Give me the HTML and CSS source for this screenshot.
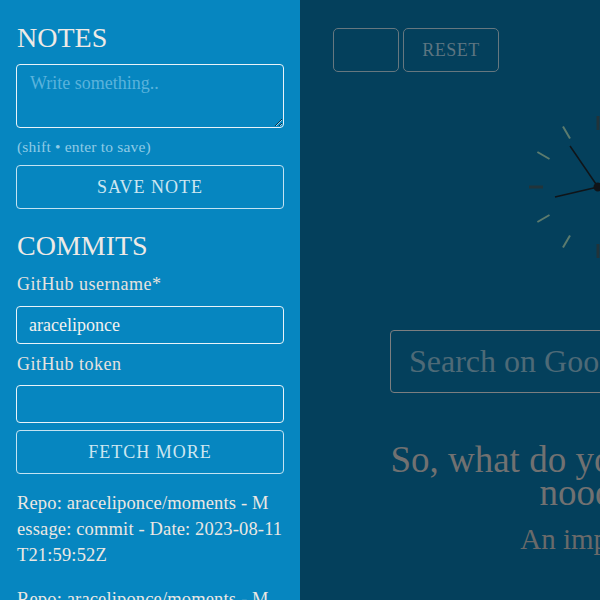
FILE: index.html
```html
<!DOCTYPE html>
<html lang="en">
<head>
<meta charset="utf-8">
<title>Moments</title>
<link rel="stylesheet" href="styles.css">
</head>
<body>
<div class="app">
  <aside class="sidebar">
    <h2 class="title">NOTES</h2>
    <textarea class="note-input" placeholder="Write something.."></textarea>
    <p class="hint">(shift • enter to save)</p>
    <button class="btn btn-save">SAVE NOTE</button>
    <h2 class="title title-commits">COMMITS</h2>
    <label class="label">GitHub username*</label>
    <input class="field" value="araceliponce">
    <label class="label label-token">GitHub token</label>
    <input class="field field-token">
    <button class="btn btn-fetch">FETCH MORE</button>
    <div class="commits">
      <p class="commit"><span class="line">Repo: araceliponce/moments - M</span><span class="line">essage: commit - Date: 2023-08-11</span><span class="line">T21:59:52Z</span></p>
      <p class="commit"><span class="line">Repo: araceliponce/moments - M</span><span class="line">essage: commit - Date: 2023-08-11</span><span class="line">T21:40:12Z</span></p>
    </div>
  </aside>
  <main class="main">
    <div class="toolbar">
      <button class="tool-btn tool-empty"></button>
      <button class="tool-btn tool-reset">RESET</button>
    </div>
    <svg class="clock" width="160" height="160" viewBox="-80 -80 160 160">
      <g class="ticks-minor" stroke="#5c7b6e" stroke-width="2">
        <line x1="28" y1="-48.5" x2="35" y2="-60.6"/>
        <line x1="48.5" y1="-28" x2="60.6" y2="-35"/>
        <line x1="48.5" y1="28" x2="60.6" y2="35"/>
        <line x1="28" y1="48.5" x2="35" y2="60.6"/>
        <line x1="-28" y1="48.5" x2="-35" y2="60.6"/>
        <line x1="-48.5" y1="28" x2="-60.6" y2="35"/>
        <line x1="-48.5" y1="-28" x2="-60.6" y2="-35"/>
        <line x1="-28" y1="-48.5" x2="-35" y2="-60.6"/>
      </g>
      <g class="ticks-major" stroke="#21343b" stroke-width="3">
        <line x1="0" y1="-57" x2="0" y2="-71"/>
        <line x1="58" y1="0" x2="72" y2="0"/>
        <line x1="0" y1="57" x2="0" y2="71"/>
        <line x1="-55" y1="0" x2="-69" y2="0"/>
      </g>
      <line x1="0" y1="0" x2="-28" y2="-41" stroke="#101418" stroke-width="1.5"/>
      <line x1="0" y1="0" x2="-43" y2="10" stroke="#101418" stroke-width="1.5"/>
      <circle cx="0" cy="0" r="4.5" fill="#101418"/>
    </svg>
    <input class="search" placeholder="Search on Google">
    <h1 class="headline">So, what do you want to do, noodle?</h1>
    <p class="subtitle">An important</p>
  </main>
</div>
</body>
</html>
```
FILE: styles.css
```css
html, body {
  margin: 0;
  padding: 0;
}
body {
  font-family: "Liberation Serif", "Times New Roman", serif;
  background: #04405c;
  overflow: hidden;
}
.app {
  display: flex;
  width: 600px;
  height: 600px;
  overflow: hidden;
}
.sidebar {
  width: 300px;
  flex-shrink: 0;
  box-sizing: border-box;
  background: #0686c0;
  padding: 0 16px;
  display: flex;
  flex-direction: column;
  color: #ece8e4;
}
.sidebar > * {
  flex-shrink: 0;
}
.title {
  margin: 22px 0 0 1px;
  font-size: 28px;
  line-height: 31px;
  font-weight: normal;
  color: #eeeae6;
}
.title-commits {
  margin-top: 21px;
}
.note-input {
  margin: 11px 0 0;
  height: 64px;
  box-sizing: border-box;
  width: 100%;
  background: transparent;
  border: 1px solid #e8f3f9;
  border-radius: 4px;
  padding: 8px 13px;
  font-family: inherit;
  font-size: 18px;
  color: #ffffff;
  resize: vertical;
  outline: none;
}
.note-input::placeholder {
  color: #5ab3dc;
}
.hint {
  margin: 10px 0 0 1px;
  font-size: 15.5px;
  line-height: 17px;
  letter-spacing: 0.2px;
  color: #8fcbe6;
}
.btn {
  margin-top: 10px;
  height: 44px;
  width: 100%;
  box-sizing: border-box;
  background: transparent;
  border: 1px solid #c3e3f2;
  border-radius: 4px;
  font-family: inherit;
  font-size: 18px;
  letter-spacing: 1px;
  color: #cde6f1;
  display: flex;
  align-items: center;
  justify-content: center;
  padding: 0;
}
.btn-fetch {
  margin-top: 7px;
}
.label {
  margin: 13px 0 0 1px;
  font-size: 18px;
  line-height: 21px;
  letter-spacing: 0.5px;
  color: #e6e2de;
}
.label-token {
  margin-top: 10px;
}
.field {
  margin-top: 11px;
  height: 38px;
  width: 100%;
  box-sizing: border-box;
  background: transparent;
  border: 1px solid #e8f3f9;
  border-radius: 4px;
  padding: 0 12px;
  font-family: inherit;
  font-size: 18px;
  color: #f4f1ee;
  outline: none;
}
.field-token {
  margin-top: 10px;
}
.commits {
  margin-top: 16px;
}
.commit {
  margin: 0 0 18px 1px;
  font-size: 18.5px;
  line-height: 26px;
  letter-spacing: 0.15px;
  color: #ece8e3;
  white-space: nowrap;
}
.commit .line {
  display: block;
}
.main {
  width: 596px;
  flex-shrink: 0;
  display: flex;
  flex-direction: column;
  align-items: center;
}
.main > * {
  flex-shrink: 0;
}
.toolbar {
  align-self: flex-start;
  margin: 28px 0 0 33px;
  display: flex;
  gap: 4px;
}
.tool-btn {
  height: 44px;
  box-sizing: border-box;
  background: transparent;
  border: 1px solid #66777f;
  border-radius: 5px;
  font-family: inherit;
  font-size: 18px;
  letter-spacing: 0.5px;
  color: #5d7581;
  padding: 0;
}
.tool-empty {
  width: 66px;
}
.tool-reset {
  width: 96px;
}
.clock {
  margin-top: 35px;
  display: block;
}
.search {
  margin-top: 63px;
  width: 416px;
  height: 63px;
  box-sizing: border-box;
  background: transparent;
  border: 1px solid #7c7e80;
  border-radius: 4px;
  padding: 0 18px;
  font-family: inherit;
  font-size: 32px;
  color: #cccccc;
  outline: none;
}
.search::placeholder {
  color: #4e6a77;
}
.headline {
  margin: 50px 0 0;
  width: 440px;
  text-align: center;
  font-size: 37px;
  line-height: 33px;
  font-weight: normal;
  color: #717171;
}
.subtitle {
  margin: 13px 0 0;
  font-size: 29px;
  line-height: 34px;
  color: #6a6a6a;
  text-align: center;
  white-space: nowrap;
}
```
